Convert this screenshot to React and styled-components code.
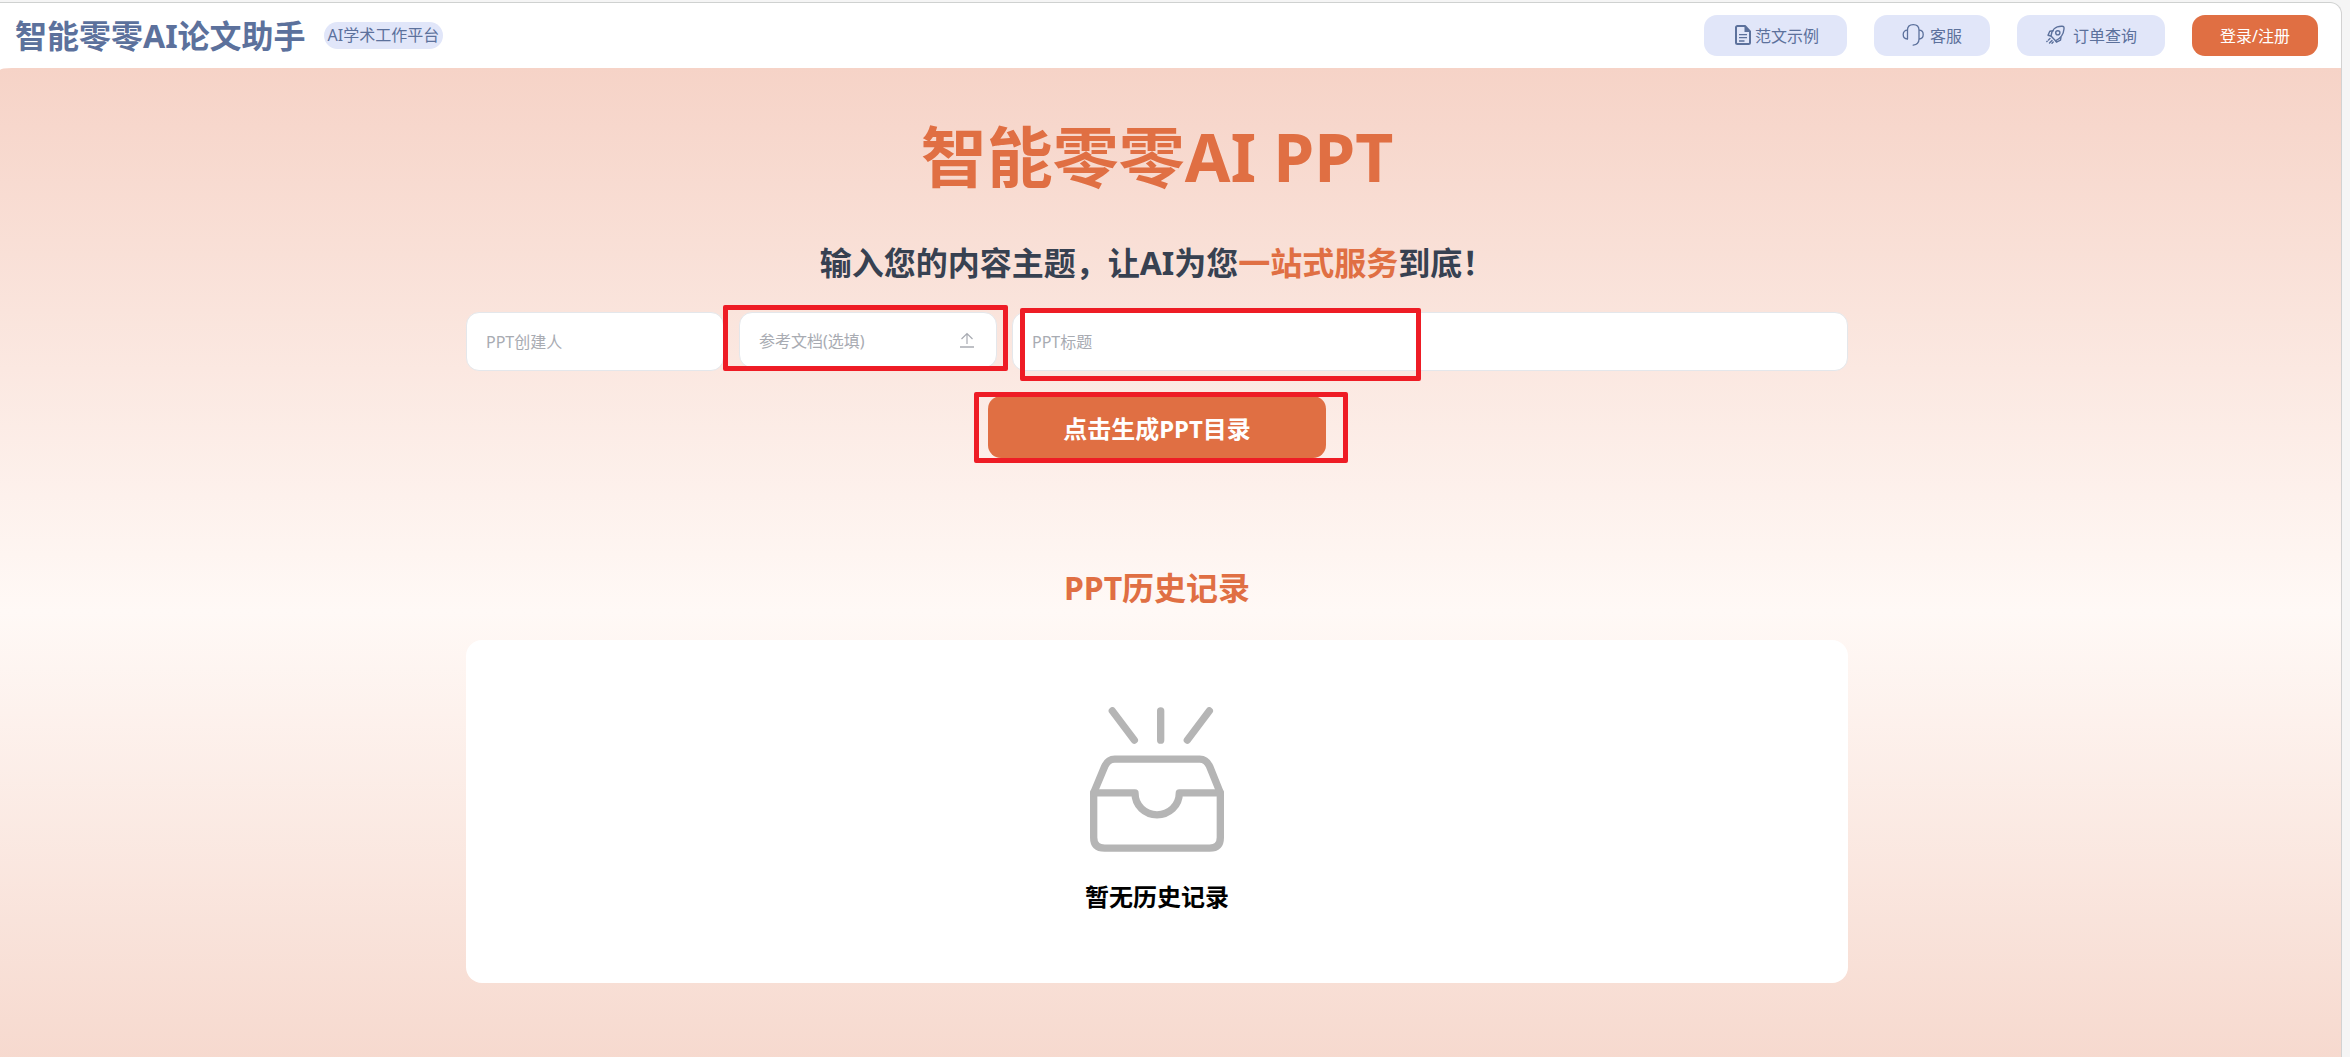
import React from 'react'
import styled, { createGlobalStyle } from 'styled-components'

const GlobalStyle=createGlobalStyle`
*{
    box-sizing: border-box;
}
body{
    margin: 0;
    font-family: "Noto Sans", "Noto Sans CJK SC", sans-serif;
    font-size: 16px;
}
h1,h2,p{
    margin: 0;
}
button,input{
    font-family: inherit;
    font-size: inherit;
}
`

const Page=styled.div`
min-height: 100vh;
padding: 2px 8px 0 0;
background: #f5f5f5;
display: flex;
`
const Container=styled.div`
flex: 1;
display: flex;
flex-direction: column;
overflow: hidden;
background: #fff;
border-top: 1px solid #cfd1d0;
border-right: 1px solid #d2d2d2;
border-top-right-radius: 12px;
`

const Header=styled.header`
display: flex;
align-items: center;
justify-content: space-between;
padding: 12px 23px 12px 15px;
color: #5c719c;
`
const Brand=styled.div`
display: flex;
align-items: center;
gap: 18px;
`
const Logo=styled.div`
font-size: 32px;
font-weight: 700;
line-height: 40px;
`
const Tag=styled.span`
padding: 0 4px;
border-radius: 14px;
line-height: 27px;
background: #e1e6f9;
`
const Nav=styled.nav`
display: flex;
gap: 27px;
`
const NavButton=styled.button`
display: flex;
align-items: center;
gap: 4px;
height: 41px;
padding: 0 28px 2px;
border: none;
border-radius: 13px;
background: ${props=>props.$primary ? "#e06f43" : "#e1e6f9"};
color: ${props=>props.$primary ? "#fff" : "#5c719c"};
cursor: pointer;
`

const Main=styled.main`
flex: 1;
display: flex;
flex-direction: column;
align-items: center;
padding: 44px 27px 45px 0;
border-top-left-radius: 12px 2px;
background: linear-gradient(#f6d3c7 0%, #fff9f6 55%, #f6d8cd 102%);
`
const Title=styled.h1`
font-size: 66px;
line-height: 88px;
color: #e06f43;
`
const Slogan=styled.p`
margin-top: 41px;
font-size: 32px;
font-weight: 700;
line-height: 44px;
color: #374151;
`
const Accent=styled.span`
color: #e06f43;
`

const Form=styled.form`
width: 100%;
max-width: 1382px;
margin-top: 27px;
display: flex;
flex-direction: column;
align-items: center;
gap: 25px;
`
const Fields=styled.div`
width: 100%;
display: flex;
align-items: flex-start;
gap: 15px;
`
const Field=styled.div`
position: relative;
flex: ${props=>props.$grow ? "1" : "0 1 258px"};
`
const Input=styled.input`
display: block;
width: 100%;
height: 59px;
padding: 0 19px;
border: 1px solid #e4e7eb;
border-radius: 13px;
background: #fff;
outline: none;
&::placeholder{
    color: #a8abb2;
    opacity: 1;
}
`
const Upload=styled.label`
display: flex;
align-items: center;
justify-content: space-between;
height: 56px;
padding: 0 21px 0 19px;
border: 1px solid #e4e7eb;
border-radius: 13px;
background: #fff;
color: #a8abb2;
cursor: pointer;
`
const FileInput=styled.input`
position: absolute;
width: 1px;
height: 1px;
opacity: 0;
`
const Action=styled.div`
position: relative;
`
const Submit=styled.button`
display: block;
width: 338px;
height: 62px;
border: none;
border-radius: 13px;
background: #e06f43;
color: #fff;
font-size: 24px;
font-weight: 700;
cursor: pointer;
`
// red frame drawn over a step of the guide
const Mark=styled.span`
position: absolute;
inset: ${props=>props.$inset};
border: 5px solid #ee1c25;
border-radius: 2px;
pointer-events: none;
`

const History=styled.section`
width: 100%;
max-width: 1382px;
margin-top: 108px;
`
const HistoryTitle=styled.h2`
font-size: 32px;
line-height: 44px;
text-align: center;
color: #e06f43;
`
const Panel=styled.div`
display: flex;
flex-direction: column;
align-items: center;
gap: 29px;
margin-top: 30px;
padding: 67px 20px 70px;
border-radius: 16px;
background: #fff;
`
const Empty=styled.p`
font-size: 24px;
font-weight: 700;
line-height: 32px;
color: #000;
`

const DocIcon = () => (
    <svg width="19" height="20" viewBox="0 0 19 20" fill="none" stroke="#5c719c" strokeWidth="2" aria-hidden="true">
        <path d="M13 1H5.5A1.5 1.5 0 0 0 4 2.500V17.500A1.500 1.500 0 0 0 5.500 19H16.500A1.500 1.500 0 0 0 18 17.500V6.500z" strokeLinejoin="round" />
        <path d="M12.500 .5V7H18.500z" fill="#5c719c" stroke="none" />
        <path d="M7 9.700H15M7 12.700H15M7 16H12.500" strokeWidth="1.300" />
    </svg>
)

const HeadsetIcon = () => (
    <svg width="24" height="24" viewBox="0 0 24 24" fill="none" stroke="#5c719c" strokeWidth="1.3" aria-hidden="true">
        <path d="M5.500 16V7C5.500 3.500 8 1.600 11.200 1.600S17 3.500 17 7V16C17 19.500 14.800 21.600 11.200 22.200" strokeLinecap="round" />
        <path d="M5.500 7.200C2.800 7.200 1.200 9 1.200 11.600S2.800 16 5.500 16M17 7.200C19.700 7.200 21.200 9 21.200 11.600S19.700 16 17 16" />
    </svg>
)

const RocketIcon = () => (
    <svg width="24" height="24" viewBox="0 0 24 24" fill="none" stroke="#5c719c" strokeWidth="1.4" strokeLinecap="round" strokeLinejoin="round" aria-hidden="true">
        <path d="M6 13C6.500 7.500 10 3 17 3.200C18.800 3.300 19.200 4 19 6C18.500 11.500 15.500 15.500 10.500 17.800z" />
        <path d="M8.200 7.800L4.800 8.200L3 12.200L6 13M16 14.200L15.500 17.200L11.500 19.200L10.500 17.800" />
        <circle cx="12.800" cy="9.800" r="2.100" />
        <path d="M5 15.500L3.500 17M2.200 18.200L1.800 18.600M7 17.500L4.500 20M8.200 19L7 20.200" />
    </svg>
)

const UploadIcon = () => (
    <svg width="16" height="16" viewBox="0 0 16 16" fill="none" stroke="#a8abb2" aria-hidden="true">
        <path d="M8 12V1.500M2.500 7L8 1.500L13.500 7" strokeWidth="1.200" />
        <path d="M1 15H15" strokeWidth="1.500" />
    </svg>
)

const EmptyIcon = () => (
    <svg width="134" height="145" viewBox="147 84 402 434" fill="none" stroke="#b5b5b5" strokeWidth="22" strokeLinecap="round" strokeLinejoin="round" aria-hidden="true">
        <path d="M214 95L280 183M359 95V183M505 95L439 183" />
        <path d="M158 341L191 262Q201 240 221 240H476Q496 240 506 262L538 341V475Q538 507 506 507H191Q158 507 158 475z" />
        <path d="M158 341H282C282 380 312 407 348 407S415 380 415 341H538" />
    </svg>
)

const App = () => {
    return (
        <>
            <GlobalStyle/>
            <Page>
                <Container>
                    <Header>
                        <Brand>
                            <Logo>智能零零AI论文助手</Logo>
                            <Tag>AI学术工作平台</Tag>
                        </Brand>
                        <Nav>
                            <NavButton><DocIcon/>范文示例</NavButton>
                            <NavButton><HeadsetIcon/>客服</NavButton>
                            <NavButton><RocketIcon/>订单查询</NavButton>
                            <NavButton $primary>登录/注册</NavButton>
                        </Nav>
                    </Header>
                    <Main>
                        <Title>智能零零AI PPT</Title>
                        <Slogan>输入您的内容主题，让AI为您<Accent>一站式服务</Accent>到底！</Slogan>
                        <Form onSubmit={(e)=>e.preventDefault()}>
                            <Fields>
                                <Field>
                                    <Input aria-label='PPT创建人' placeholder='PPT创建人'/>
                                </Field>
                                <Field>
                                    <Upload htmlFor='doc'>参考文档(选填)<UploadIcon/></Upload>
                                    <FileInput id='doc' type='file'/>
                                    <Mark $inset='-7px -11px -3px -16px'/>
                                </Field>
                                <Field $grow>
                                    <Input aria-label='PPT标题' placeholder='PPT标题'/>
                                    <Mark $inset='-4px 427px -10px 8px'/>
                                </Field>
                            </Fields>
                            <Action>
                                <Submit>点击生成PPT目录</Submit>
                                <Mark $inset='-4px -22px -5px -14px'/>
                            </Action>
                        </Form>
                        <History>
                            <HistoryTitle>PPT历史记录</HistoryTitle>
                            <Panel>
                                <EmptyIcon/>
                                <Empty>暂无历史记录</Empty>
                            </Panel>
                        </History>
                    </Main>
                </Container>
            </Page>
        </>
    )
}

export default App
